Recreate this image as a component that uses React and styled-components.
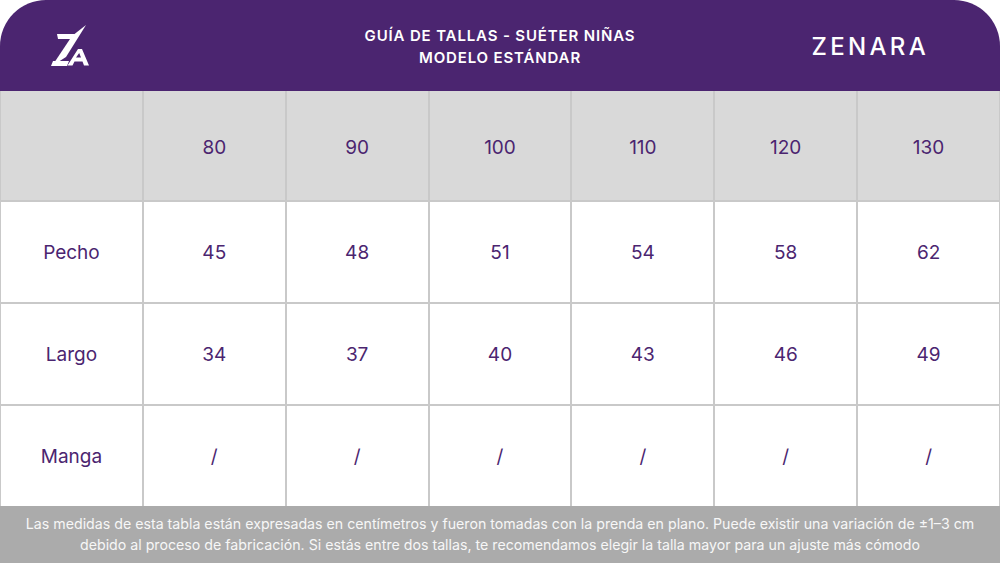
import React from "react";
import styled, { createGlobalStyle } from "styled-components";

const Global = createGlobalStyle`
  html, body { margin: 0; padding: 0; background: #ffffff; }
  body { font-family: "Inter", "DejaVu Sans", sans-serif; }
`;

const Page = styled.div`
  width: 1000px;
  height: 563px;
  display: flex;
  flex-direction: column;
  overflow: hidden;
  background: #ffffff;
`;

const Header = styled.header`
  height: 91px;
  flex: none;
  background: #4b2570;
  border-radius: 46px 46px 0 0;
  display: grid;
  grid-template-columns: 1fr auto 1fr;
  align-items: center;
  color: #ffffff;
`;

const LogoBox = styled.div`
  padding-left: 50px;
  display: flex;
  align-items: center;
`;

const Title = styled.h1`
  margin: 0;
  font-size: 15px;
  font-weight: 600;
  letter-spacing: 0.85px;
  line-height: 22px;
  text-align: center;
  padding-top: 2px;
`;

const Brand = styled.div`
  justify-self: end;
  padding-right: 71px;
  font-size: 24px;
  font-weight: 500;
  letter-spacing: 3.3px;
  padding-top: 2px;
`;

const Table = styled.div`
  flex: none;
  display: grid;
  grid-template-columns: repeat(7, 1fr);
  grid-template-rows: 109px 100px 100px 100px;
  gap: 2px;
  background: #c9c9c9;
  padding: 0 1px 0 1px;
`;

const Cell = styled.div`
  display: flex;
  align-items: center;
  justify-content: center;
  background: ${(p) => (p.$head ? "#d9d9d9" : "#ffffff")};
  color: #4b2570;
  font-size: 19px;
  font-weight: 400;
  padding-top: ${(p) => (p.$head ? "4px" : "0")};
`;

const Footer = styled.footer`
  flex: 1;
  background: #ababab;
  color: #f7f7f7;
  font-size: 14.2px;
  line-height: 21px;
  text-align: center;
  display: flex;
  flex-direction: column;
  justify-content: center;
  padding-bottom: 2px;
  white-space: nowrap;
`;

const Logo = () => (
  <svg width="42" height="44" viewBox="50 22 42 44">
    <g fill="#ffffff">
      <polygon points="57,32 75,32 73.5,37 58,37" />
      <polygon points="86,23 72,34 52,64 66,55" />
      <polygon points="53,59 69,59 67,64 51,64" />
      <path
        fillRule="evenodd"
        d="M78 47 L82 47 L89 63.5 L84 63.5 L82.5 59.5 L74.5 59.5 L72.5 63.5 L67.5 63.5 Z M76 55.5 L81 55.5 L79.2 51 Z"
      />
    </g>
  </svg>
);

const sizes = ["80", "90", "100", "110", "120", "130"];
const rows = [
  { label: "Pecho", values: ["45", "48", "51", "54", "58", "62"] },
  { label: "Largo", values: ["34", "37", "40", "43", "46", "49"] },
  { label: "Manga", values: ["/", "/", "/", "/", "/", "/"] },
];

export default function App() {
  return (
    <>
      <Global />
      <Page>
        <Header>
          <LogoBox>
            <Logo />
          </LogoBox>
          <Title>
            GUÍA DE TALLAS - SUÉTER NIÑAS
            <br />
            MODELO ESTÁNDAR
          </Title>
          <Brand>ZENARA</Brand>
        </Header>
        <Table>
          <Cell $head />
          {sizes.map((s) => (
            <Cell $head key={s}>
              {s}
            </Cell>
          ))}
          {rows.map((r) => (
            <React.Fragment key={r.label}>
              <Cell>{r.label}</Cell>
              {r.values.map((v, i) => (
                <Cell key={i}>{v}</Cell>
              ))}
            </React.Fragment>
          ))}
        </Table>
        <Footer>
          <div>
            Las medidas de esta tabla están expresadas en centímetros y fueron tomadas con la prenda en plano. Puede existir una variación de ±1–3 cm
          </div>
          <div>
            debido al proceso de fabricación. Si estás entre dos tallas, te recomendamos elegir la talla mayor para un ajuste más cómodo
          </div>
        </Footer>
      </Page>
    </>
  );
}
